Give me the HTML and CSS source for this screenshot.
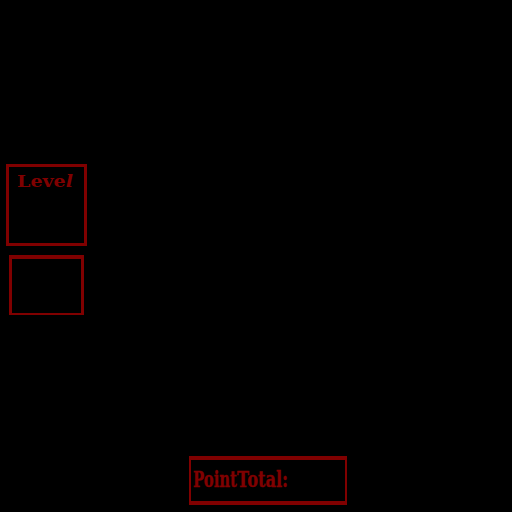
FILE: index.html
```
<!DOCTYPE html>
<html lang="en">
<head>
<meta charset="utf-8">
<title>Level</title>
<link rel="stylesheet" href="styles.css">
</head>
<body>
<main class="screen">
  <section class="box level"><span class="level-label">Leve<i>l</i></span></section>
  <section class="box slot"></section>
  <section class="box points">
    <span class="word point">Point</span><span class="word total">Total:</span>
  </section>
</main>
</body>
</html>
```
FILE: styles.css
```
* { box-sizing: border-box; }
body { margin: 0; background: #000; }
.screen {
  display: flex;
  flex-direction: column;
  width: 512px;
  height: 512px;
  padding: 164px 0 0 6px;
  overflow: hidden;
  color: #800000;
  font-family: "DejaVu Serif", "Liberation Serif", serif;
  font-weight: bold;
}
.box { border: 3px solid #800000; }
.level {
  width: 81px;
  height: 82px;
  padding: 4px 0 0 8px;
}
.level-label {
  display: block;
  width: max-content;
  font-size: 17px;
  line-height: 20px;
  transform: scaleX(1.12);
  transform-origin: left;
}
.slot {
  width: 75px;
  height: 60px;
  margin: 9px 0 0 3px;
  border-width: 4px 3px 2px;
}
.points {
  display: flex;
  width: 158px;
  height: 49px;
  margin: 141px 0 0 183px;
  padding: 7px 0 0 2px;
  border-width: 4px 2px;
}
.word {
  width: 44px;
  font-size: 22px;
  line-height: 24px;
  white-space: nowrap;
  -webkit-text-stroke: .4px #800000;
  transform: scaleX(.675);
  transform-origin: left;
}
.total { transform: scaleX(.735); }
```
